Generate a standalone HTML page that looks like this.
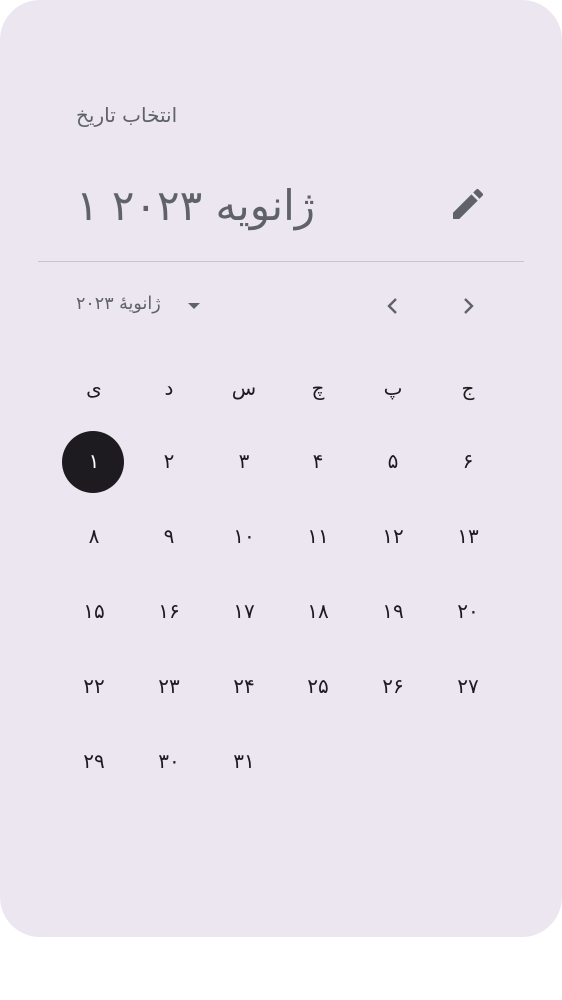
<!DOCTYPE html>
<html><head><meta charset="utf-8"><style>
html,body{margin:0;padding:0;background:#fff;width:562px;height:1000px;overflow:hidden}
body{font-family:"DejaVu Sans","Liberation Sans",sans-serif}
.card{position:absolute;left:0;top:0;width:562px;height:937px;background:#ece6f0;border-radius:40px}
.a{position:absolute;white-space:nowrap}
.c{position:absolute;width:60px;text-align:center;font-size:20px;color:#1d1b20;line-height:24px}
</style></head><body>
<div class="card"></div>
<div class="a" dir="rtl" style="left:76px;top:103px;font-size:20px;color:#5f6368">انتخاب تاریخ</div>
<div class="a" dir="rtl" style="left:76px;top:176px;font-size:42px;color:#5f6368;line-height:60px">ژانویه ۲۰۲۳ ۱</div>
<svg class="a" style="left:448px;top:184px" width="40" height="40" viewBox="0 0 24 24"><path fill="#5f6368" d="M3 17.25V21h3.75L17.81 9.94l-3.75-3.75L3 17.25zM20.71 7.04a1 1 0 0 0 0-1.41l-2.34-2.34a1 1 0 0 0-1.41 0l-1.830 1.83 3.75 3.75 1.83-1.830z"/></svg>
<div class="a" style="left:38px;top:261px;width:486px;height:1px;background:#cac4d0"></div>
<div class="a" dir="rtl" style="left:76px;top:294px;font-size:17.5px;color:#5f6368">ژانویهٔ ۲۰۲۳</div>
<svg class="a" style="left:184px;top:296px" width="20" height="20" viewBox="0 0 20 20"><path fill="#5f6368" d="M4 7h12l-6 6z"/></svg>
<svg class="a" style="left:381px;top:294px" width="24" height="24" viewBox="0 0 24 24"><path fill="none" stroke="#5f6368" stroke-width="2.4" d="M15 5l-7 7 7 7"/></svg>
<svg class="a" style="left:456px;top:294px" width="24" height="24" viewBox="0 0 24 24"><path fill="none" stroke="#5f6368" stroke-width="2.4" d="M9 5l7 7-7 7"/></svg>
<div class="a" style="left:62px;top:431px;width:62px;height:62px;border-radius:50%;background:#1d1b20"></div>

<div class="c" style="left:64px;top:376px">ی</div>
<div class="c" style="left:139px;top:376px">د</div>
<div class="c" style="left:214px;top:376px">س</div>
<div class="c" style="left:288px;top:376px">چ</div>
<div class="c" style="left:363px;top:376px">پ</div>
<div class="c" style="left:438px;top:376px">ج</div>

<div class="c" style="left:64px;top:449px;color:#fff">۱</div>
<div class="c" style="left:139px;top:449px">۲</div>
<div class="c" style="left:214px;top:449px">۳</div>
<div class="c" style="left:288px;top:449px">۴</div>
<div class="c" style="left:363px;top:449px">۵</div>
<div class="c" style="left:438px;top:449px">۶</div>

<div class="c" style="left:64px;top:524px">۸</div>
<div class="c" style="left:139px;top:524px">۹</div>
<div class="c" style="left:214px;top:524px">۱۰</div>
<div class="c" style="left:288px;top:524px">۱۱</div>
<div class="c" style="left:363px;top:524px">۱۲</div>
<div class="c" style="left:438px;top:524px">۱۳</div>

<div class="c" style="left:64px;top:599px">۱۵</div>
<div class="c" style="left:139px;top:599px">۱۶</div>
<div class="c" style="left:214px;top:599px">۱۷</div>
<div class="c" style="left:288px;top:599px">۱۸</div>
<div class="c" style="left:363px;top:599px">۱۹</div>
<div class="c" style="left:438px;top:599px">۲۰</div>

<div class="c" style="left:64px;top:674px">۲۲</div>
<div class="c" style="left:139px;top:674px">۲۳</div>
<div class="c" style="left:214px;top:674px">۲۴</div>
<div class="c" style="left:288px;top:674px">۲۵</div>
<div class="c" style="left:363px;top:674px">۲۶</div>
<div class="c" style="left:438px;top:674px">۲۷</div>

<div class="c" style="left:64px;top:749px">۲۹</div>
<div class="c" style="left:139px;top:749px">۳۰</div>
<div class="c" style="left:214px;top:749px">۳۱</div>
</body></html>
